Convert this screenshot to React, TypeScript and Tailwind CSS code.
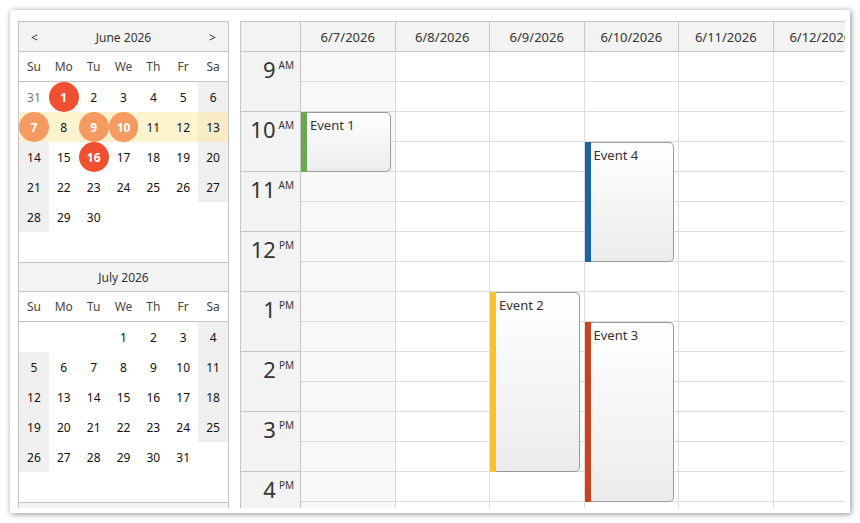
import React from "react";

type Cell = { d: number; other?: boolean; circle?: "red" | "orange" } | null;

const FONT = { fontFamily: '"Noto Sans", "Open Sans", Arial, sans-serif' };

const june: Cell[][] = [
  [{ d: 31, other: true }, { d: 1, circle: "red" }, { d: 2 }, { d: 3 }, { d: 4 }, { d: 5 }, { d: 6 }],
  [{ d: 7, circle: "orange" }, { d: 8 }, { d: 9, circle: "orange" }, { d: 10, circle: "orange" }, { d: 11 }, { d: 12 }, { d: 13 }],
  [{ d: 14 }, { d: 15 }, { d: 16, circle: "red" }, { d: 17 }, { d: 18 }, { d: 19 }, { d: 20 }],
  [{ d: 21 }, { d: 22 }, { d: 23 }, { d: 24 }, { d: 25 }, { d: 26 }, { d: 27 }],
  [{ d: 28 }, { d: 29 }, { d: 30 }, null, null, null, null],
  [null, null, null, null, null, null, null],
];

const july: Cell[][] = [
  [null, null, null, { d: 1 }, { d: 2 }, { d: 3 }, { d: 4 }],
  [{ d: 5 }, { d: 6 }, { d: 7 }, { d: 8 }, { d: 9 }, { d: 10 }, { d: 11 }],
  [{ d: 12 }, { d: 13 }, { d: 14 }, { d: 15 }, { d: 16 }, { d: 17 }, { d: 18 }],
  [{ d: 19 }, { d: 20 }, { d: 21 }, { d: 22 }, { d: 23 }, { d: 24 }, { d: 25 }],
  [{ d: 26 }, { d: 27 }, { d: 28 }, { d: 29 }, { d: 30 }, { d: 31 }, null],
  [null, null, null, null, null, null, null],
];

const dayNames = ["Su", "Mo", "Tu", "We", "Th", "Fr", "Sa"];

function Month({ title, rows, highlightRow, nav, first }: { title: string; rows: Cell[][]; highlightRow?: number; nav?: boolean; first?: boolean }) {
  return (
    <div className="flex flex-col shrink-0">
      <div className={`h-[30px] bg-[#f3f3f3] border-b border-[#c4c4c4] ${first ? "" : "border-t"} flex items-center justify-between px-[12px] pt-[2px] text-[12px] text-[#333]`}>
        <span className="w-[10px]">{nav ? "<" : ""}</span>
        <span>{title}</span>
        <span className="w-[10px] text-right">{nav ? ">" : ""}</span>
      </div>
      <div className="h-[30px] border-b border-[#c4c4c4] grid grid-cols-7 text-[12px] text-[#444]">
        {dayNames.map((n) => (
          <div key={n} className="flex items-center justify-center pt-[1px]">{n}</div>
        ))}
      </div>
      {rows.map((row, ri) => (
        <div key={ri} className="h-[30px] grid grid-cols-7 text-[12px]">
          {row.map((c, ci) => {
            const weekend = ci === 0 || ci === 6;
            let bg = "bg-white";
            if (ri === highlightRow) bg = ci === 6 ? "bg-[#f9ebc5]" : "bg-[#fef3cf]";
            else if (c && !c.other && weekend) bg = "bg-[#f0f0f0]";
            return (
              <div key={ci} className={`h-[30px] flex items-center justify-center ${bg}`}>
                {c && c.circle ? (
                  <div className={`w-[30px] h-[30px] rounded-full flex items-center justify-center pt-[1px] font-bold text-white ${c.circle === "red" ? "bg-[#ef5031]" : "bg-[#f59a60]"}`}>
                    {c.d}
                  </div>
                ) : c ? (
                  <span className={`pt-[1px] ${c.other ? "text-[#777]" : "text-[#111]"}`}>{c.d}</span>
                ) : null}
              </div>
            );
          })}
        </div>
      ))}
    </div>
  );
}

const days = ["6/7/2026", "6/8/2026", "6/9/2026", "6/10/2026", "6/11/2026", "6/12/2026"];
const hours = [
  ["9", "AM"],
  ["10", "AM"],
  ["11", "AM"],
  ["12", "PM"],
  ["1", "PM"],
  ["2", "PM"],
  ["3", "PM"],
  ["4", "PM"],
];

type Ev = { day: number; top: number; height: number; text: string; color: string };
const events: Ev[] = [
  { day: 0, top: 60, height: 60, text: "Event 1", color: "bg-[#6aa84f]" },
  { day: 3, top: 90, height: 120, text: "Event 4", color: "bg-[#1c64a8]" },
  { day: 2, top: 240, height: 180, text: "Event 2", color: "bg-[#f1c232]" },
  { day: 3, top: 270, height: 180, text: "Event 3", color: "bg-[#cc4125]" },
];

function Calendar() {
  return (
    <div className="flex-1 h-full overflow-hidden border-l border-t border-[#c4c4c4] flex flex-col">
      <div className="flex h-[30px] shrink-0 border-b border-[#c4c4c4] bg-[#f3f3f3]">
        <div className="w-[60px] shrink-0 border-r border-[#c4c4c4]" />
        {days.map((d) => (
          <div key={d} className="w-[94.5px] shrink-0 border-r border-[#c4c4c4] flex items-center justify-center pt-[2px] text-[13px] text-[#333] whitespace-nowrap">
            {d}
          </div>
        ))}
      </div>
      <div className="flex flex-1 min-h-0">
        <div className="w-[60px] shrink-0 border-r border-[#c4c4c4] bg-[#f3f3f3] flex flex-col">
          {hours.map(([h, ap]) => (
            <div key={h + ap} className="h-[60px] shrink-0 border-b border-[#c4c4c4] flex justify-end items-start pr-[6px] pt-[3px] text-[#333]">
              <span className="text-[22px] leading-[28px]">{h}</span>
              <span className="text-[10px] leading-[14px] ml-[3px] mt-[3px]">{ap}</span>
            </div>
          ))}
        </div>
        {days.map((d, di) => (
          <div key={d} className={`w-[94.5px] shrink-0 border-r border-[#dcdcdc] relative flex flex-col ${di === 0 ? "bg-[#f8f8f8]" : "bg-white"}`}>
            {Array.from({ length: 16 }).map((_, i) => (
              <div key={i} className="h-[30px] shrink-0 border-b border-[#dcdcdc]" />
            ))}
            {events
              .filter((e) => e.day === di)
              .map((e) => (
                <div key={e.text} className="absolute left-0 right-[4px] flex" style={{ top: e.top, height: e.height }}>
                  <div className={`w-[6px] shrink-0 ${e.color}`} />
                  <div className="flex-1 border-y border-r border-[#9a9a9a] rounded-r-[5px] bg-gradient-to-b from-white to-[#ececec] pl-[3px] pt-[3px] text-[13px] leading-[18px] text-[#333]">
                    {e.text}
                  </div>
                </div>
              ))}
          </div>
        ))}
      </div>
    </div>
  );
}

export default function App() {
  return (
    <div className="w-[860px] h-[523px] bg-white p-[10px]" style={FONT}>
      <div className="w-[840px] h-[503px] bg-white shadow-[1px_1px_6px_rgba(0,0,0,0.45)] pl-[8px] pt-[11px] pr-[5px] pb-[5px] flex gap-[11px]">
        <div className="w-[211px] h-[487px] shrink-0 border-x border-t border-[#c4c4c4] overflow-hidden flex flex-col">
          <Month title="June 2026" rows={june} highlightRow={1} nav first />
          <Month title="July 2026" rows={july} />
          <div className="h-[30px] shrink-0 bg-[#f3f3f3] border-t border-[#c4c4c4]" />
        </div>
        <Calendar />
      </div>
    </div>
  );
}
